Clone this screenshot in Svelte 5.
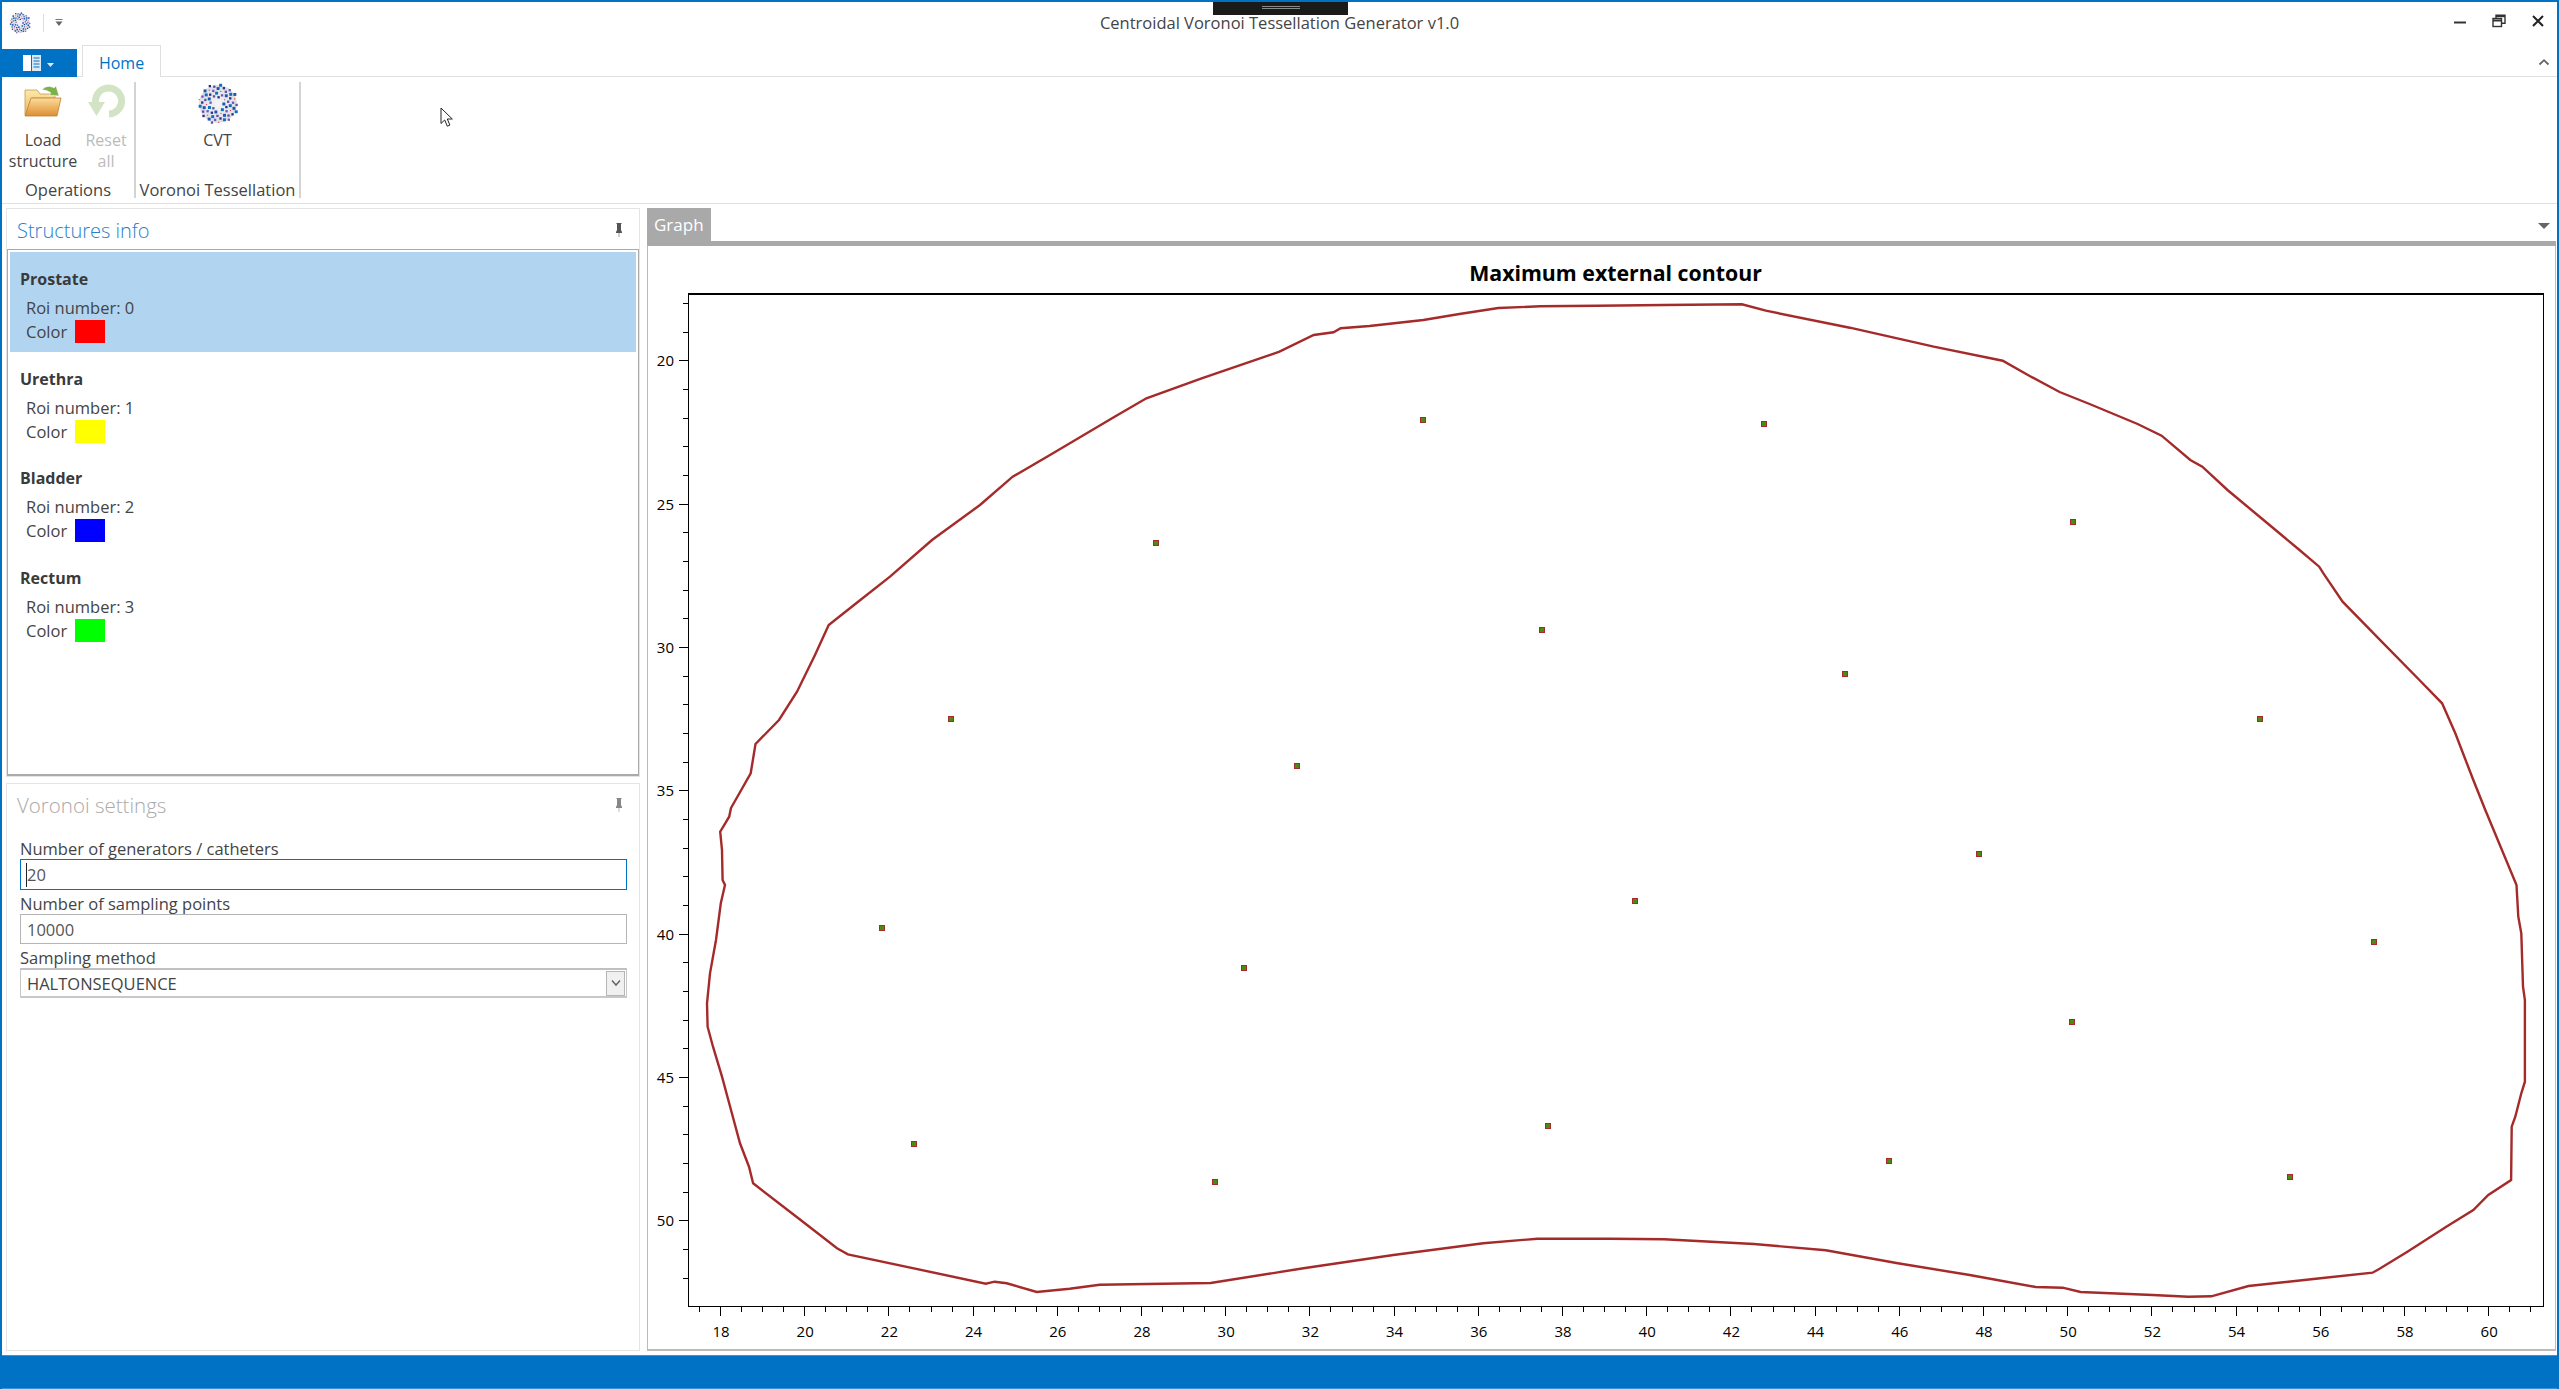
<script>
	const structures = [
		{ name: 'Prostate', roi: 0, color: '#ff0000' },
		{ name: 'Urethra', roi: 1, color: '#ffff00' },
		{ name: 'Bladder', roi: 2, color: '#0000ff' },
		{ name: 'Rectum', roi: 3, color: '#00ff00' }
	];

	// chart geometry, in page pixels
	const plot = { left: 688, right: 2543, top: 294, bottom: 1306 };
	const xPos = (v) => 720 + 42.1 * (v - 18);
	const yPos = (v) => 360.3 + 28.67 * (v - 20);

	const xTicks = [];
	for (let v = 17.5; v <= 61; v += 0.5) xTicks.push(v);
	const yTicks = [];
	for (let v = 18; v <= 52; v += 1) yTicks.push(v);

	const contour = [
		[731, 808], [750.7, 773.3], [755.5, 744], [779, 720], [797, 691.7], [815, 655], [828.7, 625],
		[854, 605], [890, 576.7], [932, 540], [980, 505], [1012.7, 476.7], [1051.7, 454], [1114.6, 416.7],
		[1146.4, 398.3], [1201.6, 378.3], [1279.5, 351.7], [1313.7, 335], [1333.5, 332.3], [1340.7, 328.3],
		[1369.5, 326], [1423.4, 320], [1459.4, 314], [1498.4, 308], [1540.3, 306.3], [1597.3, 305.7],
		[1664, 305], [1741.9, 304.3], [1765.9, 310.7], [1849.8, 327.7], [1933.7, 346.7], [2002.7, 360.7],
		[2029.7, 376], [2059.6, 392], [2089.6, 404], [2137.6, 424], [2161.6, 435.7], [2190.3, 460],
		[2202.3, 466.7], [2227.5, 490], [2263.5, 520], [2299.5, 550], [2319.2, 566.7], [2323.4, 573.3],
		[2342.6, 601.7], [2383.4, 643.3], [2419.4, 680], [2442.1, 703.3], [2455.3, 733.3], [2473.3, 780],
		[2485.3, 810], [2516.5, 885], [2518.3, 916.7], [2521.3, 933.3], [2523, 986.7], [2524.9, 1000],
		[2524.9, 1081.7], [2521.3, 1093.3], [2515.3, 1116.7], [2511.7, 1126.7], [2511.1, 1180], [2488.3, 1195],
		[2473.3, 1210], [2446.3, 1226.7], [2407.4, 1251.7], [2380.4, 1268.3], [2372.6, 1272.7], [2320.4, 1278.3],
		[2248.5, 1286], [2211.3, 1296.3], [2188.5, 1296.7], [2152.6, 1295], [2080.6, 1292], [2062.6, 1287.7],
		[2035.7, 1287], [1969.7, 1275], [1897.8, 1263.3], [1825.8, 1250.3], [1753.9, 1244], [1664, 1239.3],
		[1610, 1238.7], [1537.3, 1238.7], [1483.3, 1243.3], [1393.4, 1255], [1303.5, 1268.3], [1210.6, 1283],
		[1099.7, 1284.7], [1069.7, 1288.7], [1036.7, 1292], [1006.7, 1283.3], [994.7, 1281.7], [985.8, 1283.7],
		[847.9, 1254.3], [837, 1248.3], [802.9, 1221.7], [753.1, 1183.3], [749, 1166.7], [740, 1143.3],
		[731, 1110], [722, 1076.7], [713, 1046.7], [707.6, 1026.7], [707, 1003.3], [710, 973.3], [716, 940],
		[720.8, 903.3], [725, 885], [722.6, 880], [722, 850], [720.2, 831.7], [729.2, 816.7]
	];
	const contourPoints = contour.map((p) => p.join(',')).join(' ');

	const generators = [
		[951, 719.3], [1156, 542.7], [1423.4, 420], [1541.5, 630], [1297, 765.7],
		[1764, 424], [2072.8, 521.7], [1845, 674], [2260, 719.3],
		[1635.2, 900.7], [1979.3, 854.3], [2071.6, 1021.7], [2373.8, 941.7], [1888.8, 1160.7], [2289.9, 1176.7],
		[882, 928], [1243.5, 968], [914.4, 1144.3], [1215.4, 1181.7], [1547.5, 1125.7]
	];

	// scattered squares for the CVT logo
	const dotColors = ['#1f55b0', '#5b4fa8', '#27307f', '#0b6fc0', '#6a5ab8', '#c8384a'];
	const cvtDots = [];
	for (let i = 0; i < 64; i++) {
		const r = 19 * Math.sqrt((i + 6) / 70);
		const a = i * 2.399963;
		cvtDots.push({
			x: 20 + r * Math.cos(a),
			y: 20 + r * Math.sin(a),
			s: i % 6 === 5 ? 1 : i % 3 === 0 ? 2.8 : 2.2,
			c: dotColors[i % dotColors.length]
		});
	}
</script>

{#snippet cvtLogo(size)}
	<svg class="logo" width={size} height={size} viewBox="0 0 40 40">
		<defs>
			<radialGradient id="sphere-{size}">
				<stop offset="0" stop-color="#f6f6f8" />
				<stop offset="1" stop-color="#dcdce2" />
			</radialGradient>
		</defs>
		<circle cx="20" cy="20" r="18" fill="url(#sphere-{size})" />
		{#each cvtDots as d}
			<rect x={d.x - d.s / 2} y={d.y - d.s / 2} width={d.s} height={d.s} fill={d.c} />
		{/each}
	</svg>
{/snippet}

{#snippet pin(dim)}
	<svg class="pin" class:dim width="10" height="16" viewBox="0 0 10 16">
		<path d="M2.5 1h5v1h-.5v6l1 2v1h-6v-1l1-2V2h-.5z" fill="#555" />
		<path d="M5 11v4" stroke="#bbb" stroke-width="1.4" />
	</svg>
{/snippet}

<div class="window">
	<div class="connection-bar"><span></span><span></span></div>

	<header class="titlebar">
		<div class="quick">
			{@render cvtLogo(22)}
			<span class="quick-sep"></span>
			<svg width="10" height="10" viewBox="0 0 10 10">
				<path d="M1.5 1.5h7" stroke="#777" stroke-width="1" />
				<path d="M1.5 3.5h7L5 8z" fill="#666" />
			</svg>
		</div>
		<div class="title">Centroidal Voronoi Tessellation Generator v1.0</div>
		<div class="controls">
			<div class="control">
				<svg width="14" height="14" viewBox="0 0 14 14"><path d="M1 8.5h12" stroke="#333" stroke-width="2" /></svg>
			</div>
			<div class="control">
				<svg width="14" height="14" viewBox="0 0 14 14" fill="none" stroke="#333" stroke-width="1.4">
					<rect x="1" y="4.5" width="8.5" height="8" />
					<path d="M1 6.5h8.5" stroke-width="2" />
					<path d="M4 4.5V1.2h9v8h-3.5" />
					<path d="M4 2.2h9" stroke-width="2" />
				</svg>
			</div>
			<div class="control">
				<svg width="14" height="14" viewBox="0 0 14 14"><path d="M2 2l10 10M12 2L2 12" stroke="#222" stroke-width="2" /></svg>
			</div>
		</div>
	</header>

	<nav class="tabs">
		<div class="app-menu">
			<svg width="34" height="18" viewBox="0 0 34 18">
				<rect x="0" y="1" width="8" height="16" fill="#fff" />
				<rect x="9" y="1" width="9" height="16" fill="#dce8f4" />
				<path d="M10.5 4h6M10.5 7h6M10.5 10h6M10.5 13h6" stroke="#0072c6" stroke-width="1" />
				<path d="M24 9h7l-3.5 4z" fill="#dce8f4" />
			</svg>
		</div>
		<div class="tab">Home</div>
		<svg class="collapse" width="12" height="8" viewBox="0 0 12 8">
			<path d="M1.5 6.5L6 2.2l4.5 4.3" fill="none" stroke="#666" stroke-width="1.8" />
		</svg>
	</nav>

	<section class="ribbon">
		<div class="group ops">
			<div class="buttons">
				<div class="big-button load">
					<svg width="40" height="36" viewBox="0 0 40 36">
						<defs>
							<linearGradient id="folder-back" x1="0" y1="0" x2="0" y2="1">
								<stop offset="0" stop-color="#fde9a8" />
								<stop offset="1" stop-color="#e8b865" />
							</linearGradient>
							<linearGradient id="folder-front" x1="0" y1="0" x2="0" y2="1">
								<stop offset="0" stop-color="#fbdc9a" />
								<stop offset="1" stop-color="#dd8f33" />
							</linearGradient>
						</defs>
						<path d="M2 7h12l3 4h15v4H9L4 32H2z" fill="url(#folder-back)" stroke="#c89a50" stroke-width=".8" />
						<path d="M8 15h30l-4 18H2z" fill="url(#folder-front)" stroke="#c47e2c" stroke-width=".8" />
						<path d="M19 7c3-4 8-4.500 12-2l2-2 3 10-10-1 2-2c-3-2.500-6-3-9-3z" fill="#7fb04e" stroke="#fff" stroke-width=".5" />
					</svg>
					<div class="label">Load<br />structure</div>
				</div>
				<div class="big-button reset">
					<svg width="40" height="36" viewBox="0 0 40 36">
						<path d="M11 24A13 13 0 1 1 23 31" fill="none" stroke="#d3e4c4" stroke-width="7" />
						<path d="M2 19h17l-8.500 14z" fill="#d3e4c4" />
					</svg>
					<div class="label">Reset<br />all</div>
				</div>
			</div>
			<div class="caption">Operations</div>
		</div>
		<div class="group voronoi">
			<div class="buttons">
				<div class="big-button">
					{@render cvtLogo(42)}
					<div class="label cvt">CVT</div>
				</div>
			</div>
			<div class="caption">Voronoi Tessellation</div>
		</div>
	</section>

	<main class="main">
		<aside class="side">
			<section class="panel structures">
				<div class="panel-title accent">
					<span>Structures info</span>
					{@render pin(false)}
				</div>
				<div class="list">
					{#each structures as s, i}
						<div class="item" class:selected={i === 0}>
							<div class="item-name">{s.name}</div>
							<div class="item-line roi">Roi number: {s.roi}</div>
							<div class="item-line color-row">
								<span class="color-label">Color</span>
								<span class="swatch" style="background: {s.color}"></span>
							</div>
						</div>
					{/each}
				</div>
			</section>

			<section class="panel settings">
				<div class="panel-title">
					<span>Voronoi settings</span>
					{@render pin(true)}
				</div>
				<div class="form">
					<label class="field-label" for="generators">Number of generators / catheters</label>
					<div class="input-wrap">
						<input id="generators" class="input focused" value="20" />
						<span class="caret"></span>
					</div>
					<label class="field-label" for="samples">Number of sampling points</label>
					<div class="input-wrap">
						<input id="samples" class="input" value="10000" />
					</div>
					<div class="field-label">Sampling method</div>
					<div class="combo">
						<span>HALTONSEQUENCE</span>
						<div class="combo-button">
							<svg width="12" height="8" viewBox="0 0 12 8">
								<path d="M2 1.500L6 6l4-4.500" fill="none" stroke="#666" stroke-width="1.500" />
							</svg>
						</div>
					</div>
				</div>
			</section>
		</aside>

		<section class="graph">
			<div class="graph-tabs">
				<div class="graph-tab">Graph</div>
				<svg class="tab-menu" width="14" height="8" viewBox="0 0 14 8"><path d="M1 1h12L7 7z" fill="#666" /></svg>
			</div>
			<div class="graph-body">
				<svg class="chart" viewBox="648 246 1905 1103" width="1905" height="1103">
					<text class="chart-title" x={(plot.left + plot.right) / 2} y="281" text-anchor="middle">Maximum external contour</text>

					<g class="axes">
						<rect x={plot.left} y={plot.top - 1} width={plot.right - plot.left + 1} height="2" fill="#000" />
						<rect x={plot.left} y={plot.top} width="1" height={plot.bottom - plot.top} fill="#000" />
						<rect x={plot.right} y={plot.top} width="1" height={plot.bottom - plot.top} fill="#000" />
						<rect x={plot.left} y={plot.bottom} width={plot.right - plot.left + 1} height="1" fill="#000" />

						{#each yTicks as v}
							{@const major = v % 5 === 0}
							<rect x={plot.left - (major ? 9 : 5)} y={Math.round(yPos(v))} width={major ? 9 : 5} height="1" fill="#000" />
							{#if major}
								<text class="tick" x="674" y={yPos(v) + 6} text-anchor="end">{v}</text>
							{/if}
						{/each}

						{#each xTicks as v}
							{@const major = v % 2 === 0}
							<rect x={Math.round(xPos(v))} y={plot.bottom} width="1" height={major ? 10 : 6} fill="#000" />
							{#if major}
								<text class="tick" x={xPos(v) + 1} y="1337" text-anchor="middle">{v}</text>
							{/if}
						{/each}
					</g>

					<polygon points={contourPoints} fill="none" stroke="#a52a2a" stroke-width="2.4" />

					{#each generators as g}
						<rect x={Math.round(g[0]) - 3} y={Math.round(g[1]) - 3} width="6" height="6" fill="#a52a2a" />
						<rect x={Math.round(g[0]) - 2} y={Math.round(g[1]) - 2} width="4" height="4" fill="#4f8a10" />
					{/each}
				</svg>
			</div>
		</section>
	</main>

	<footer class="status"></footer>

	<svg class="cursor" width="14" height="21" viewBox="0 0 14 21">
		<path d="M1 1v15.500l3.700-3.500 2.600 6.200 2.600-1.100-2.600-6.100h5z" fill="#fff" stroke="#222" stroke-width="1" />
	</svg>
</div>

<style>
	:global(body) {
		margin: 0;
		background: #fff;
	}

	.window {
		position: relative;
		box-sizing: border-box;
		width: 2559px;
		height: 1389px;
		display: flex;
		flex-direction: column;
		overflow: hidden;
		border: 2px solid #0072c6;
		border-bottom: none;
		color: #444;
		background: #fff;
		font-family: 'Open Sans', 'Noto Sans', sans-serif;
		font-size: 16.5px;
	}

	.connection-bar {
		position: absolute;
		left: 1211px;
		top: -2px;
		width: 135px;
		height: 15px;
		display: flex;
		flex-direction: column;
		align-items: center;
		justify-content: center;
		gap: 1px;
		background: #1a1a1a;
	}

	.connection-bar span {
		width: 38px;
		height: 1px;
		background: #8a8a8a;
	}

	.titlebar {
		height: 44px;
		display: grid;
		grid-template-columns: 1fr auto 1fr;
		align-items: center;
	}

	.quick {
		display: flex;
		align-items: center;
		padding: 0 0 2px 7px;
	}

	.quick-sep {
		width: 1px;
		height: 18px;
		margin: 0 10px 0 12px;
		background: #ddd;
	}

	.title {
		margin-bottom: 3px;
		font-size: 16.5px;
		color: #444;
	}

	.controls {
		display: flex;
		justify-content: flex-end;
	}

	.control {
		width: 39px;
		display: flex;
		justify-content: center;
		margin-bottom: 6px;
	}

	.tabs {
		position: relative;
		height: 31px;
		box-sizing: border-box;
		display: flex;
		align-items: flex-end;
		border-bottom: 1px solid #dfdfdf;
	}

	.app-menu {
		width: 75px;
		height: 28px;
		margin-bottom: -1px;
		display: flex;
		align-items: center;
		justify-content: center;
		background: #0072c6;
	}

	.tab {
		width: 79px;
		height: 32px;
		box-sizing: border-box;
		margin-left: 5px;
		margin-bottom: -1px;
		border: 1px solid #dfdfdf;
		border-bottom: none;
		background: #fff;
		color: #0072c6;
		font-size: 16px;
		line-height: 34px;
		text-align: center;
	}

	.collapse {
		position: absolute;
		right: 7px;
		top: 12px;
	}

	.ribbon {
		height: 127px;
		box-sizing: border-box;
		display: flex;
		align-items: flex-start;
		padding-top: 5px;
		border-bottom: 1px solid #dfdfdf;
	}

	.group {
		height: 116px;
		display: flex;
		flex-direction: column;
		box-sizing: border-box;
		border-right: 2px solid #d4d4d4;
	}

	.group.ops {
		width: 134px;
	}

	.group.voronoi {
		width: 165px;
	}

	.buttons {
		display: flex;
		justify-content: center;
		gap: 4px;
	}

	.big-button {
		display: flex;
		flex-direction: column;
		align-items: center;
		padding-top: 1px;
		text-align: center;
	}

	.big-button.load {
		width: 72px;
	}

	.big-button.reset {
		width: 46px;
		color: #bbb;
	}

	.label {
		margin-top: 11px;
		line-height: 21px;
		color: inherit;
		font-size: 16px;
	}

	.label.cvt {
		margin-top: 5px;
	}

	.caption {
		margin-top: auto;
		height: 16px;
		line-height: 16px;
		text-align: center;
		white-space: nowrap;
	}

	.main {
		flex: 1;
		min-height: 0;
		display: flex;
		gap: 7px;
		padding: 4px 1px 4px 4px;
	}

	.side {
		width: 634px;
		display: flex;
		flex-direction: column;
		gap: 6px;
	}

	.panel {
		box-sizing: border-box;
		display: flex;
		flex-direction: column;
		border: 1px solid #e4e4e4;
	}

	.panel.structures {
		height: 569px;
	}

	.panel.settings {
		flex: 1;
	}

	.panel-title {
		height: 40px;
		flex: none;
		box-sizing: border-box;
		display: flex;
		align-items: center;
		justify-content: space-between;
		padding: 2px 15px 0 10px;
		color: #aaa;
		font-size: 20.5px;
		font-weight: 300;
	}

	.panel-title.accent {
		color: #2b80cc;
		font-size: 20px;
	}

	.pin.dim {
		opacity: 0.7;
	}

	.list {
		flex: 1;
		box-sizing: border-box;
		padding: 2px 2px 0;
		border: 1px solid #aaa;
		border-bottom-width: 2px;
	}

	.item {
		height: 99.6px;
		box-sizing: border-box;
		padding: 16px 0 0 10px;
	}

	.item.selected {
		background: #b1d5f0;
	}

	.item-name {
		line-height: 22px;
		font-weight: 700;
		color: #3a3a3a;
		font-size: 16px;
	}

	.item-line {
		margin-left: 6px;
	}

	.roi {
		margin-top: 6px;
		line-height: 24px;
	}

	.color-row {
		display: flex;
		align-items: center;
		height: 23px;
	}

	.color-label {
		width: 49px;
	}

	.swatch {
		width: 30px;
		height: 23px;
	}

	.form {
		padding: 11px 12px 0 13px;
	}

	.field-label {
		display: block;
		height: 21px;
		margin-top: 3px;
		line-height: 21px;
		color: #444;
	}

	.input-wrap {
		position: relative;
	}

	.input {
		display: block;
		width: 100%;
		height: 30px;
		box-sizing: border-box;
		padding: 0 6px;
		border: 1px solid #b5b5b5;
		outline: none;
		color: #555;
		font: inherit;
	}

	.input.focused {
		height: 31px;
		border: 1px solid #0072c6;
	}

	.caret {
		position: absolute;
		left: 6px;
		top: 4px;
		width: 1px;
		height: 24px;
		background: #222;
	}

	.combo {
		height: 30px;
		box-sizing: border-box;
		display: flex;
		align-items: center;
		justify-content: space-between;
		padding: 0 1px 0 6px;
		border: 1px solid #c8c8c8;
		border-top: 2px solid #c0c0c0;
		border-bottom: 2px solid #c8c8c8;
	}

	.combo-button {
		width: 19px;
		height: 25px;
		box-sizing: border-box;
		display: flex;
		align-items: center;
		justify-content: center;
		border: 1px solid #b5b5b5;
		background: #f0f0f0;
	}

	.graph {
		flex: 1;
		min-width: 0;
		display: flex;
		flex-direction: column;
	}

	.graph-tabs {
		height: 33px;
		flex: none;
		position: relative;
		border-bottom: 5px solid #a9a9a9;
	}

	.graph-tab {
		width: 64px;
		height: 33px;
		box-sizing: border-box;
		padding-left: 7px;
		background: #a9a9a9;
		color: #fff;
		font-size: 17px;
		line-height: 34px;
	}

	.tab-menu {
		position: absolute;
		right: 5px;
		top: 14px;
	}

	.graph-body {
		flex: 1;
		min-height: 0;
		border: 1px solid #bbb;
		border-top: none;
		border-bottom-width: 2px;
	}

	.chart {
		display: block;
	}

	.chart-title {
		font-size: 21.3px;
		font-weight: 700;
		fill: #000;
	}

	.tick {
		font-size: 15px;
		fill: #000;
	}

	.axes rect {
		shape-rendering: crispEdges;
	}

	.status {
		height: 34px;
		flex: none;
		box-sizing: border-box;
		background: #0072c6;
		border-top: 1px solid #3a94d6;
		border-bottom: 1px solid #3a94d6;
	}

	.cursor {
		position: absolute;
		left: 438px;
		top: 105px;
	}
</style>
